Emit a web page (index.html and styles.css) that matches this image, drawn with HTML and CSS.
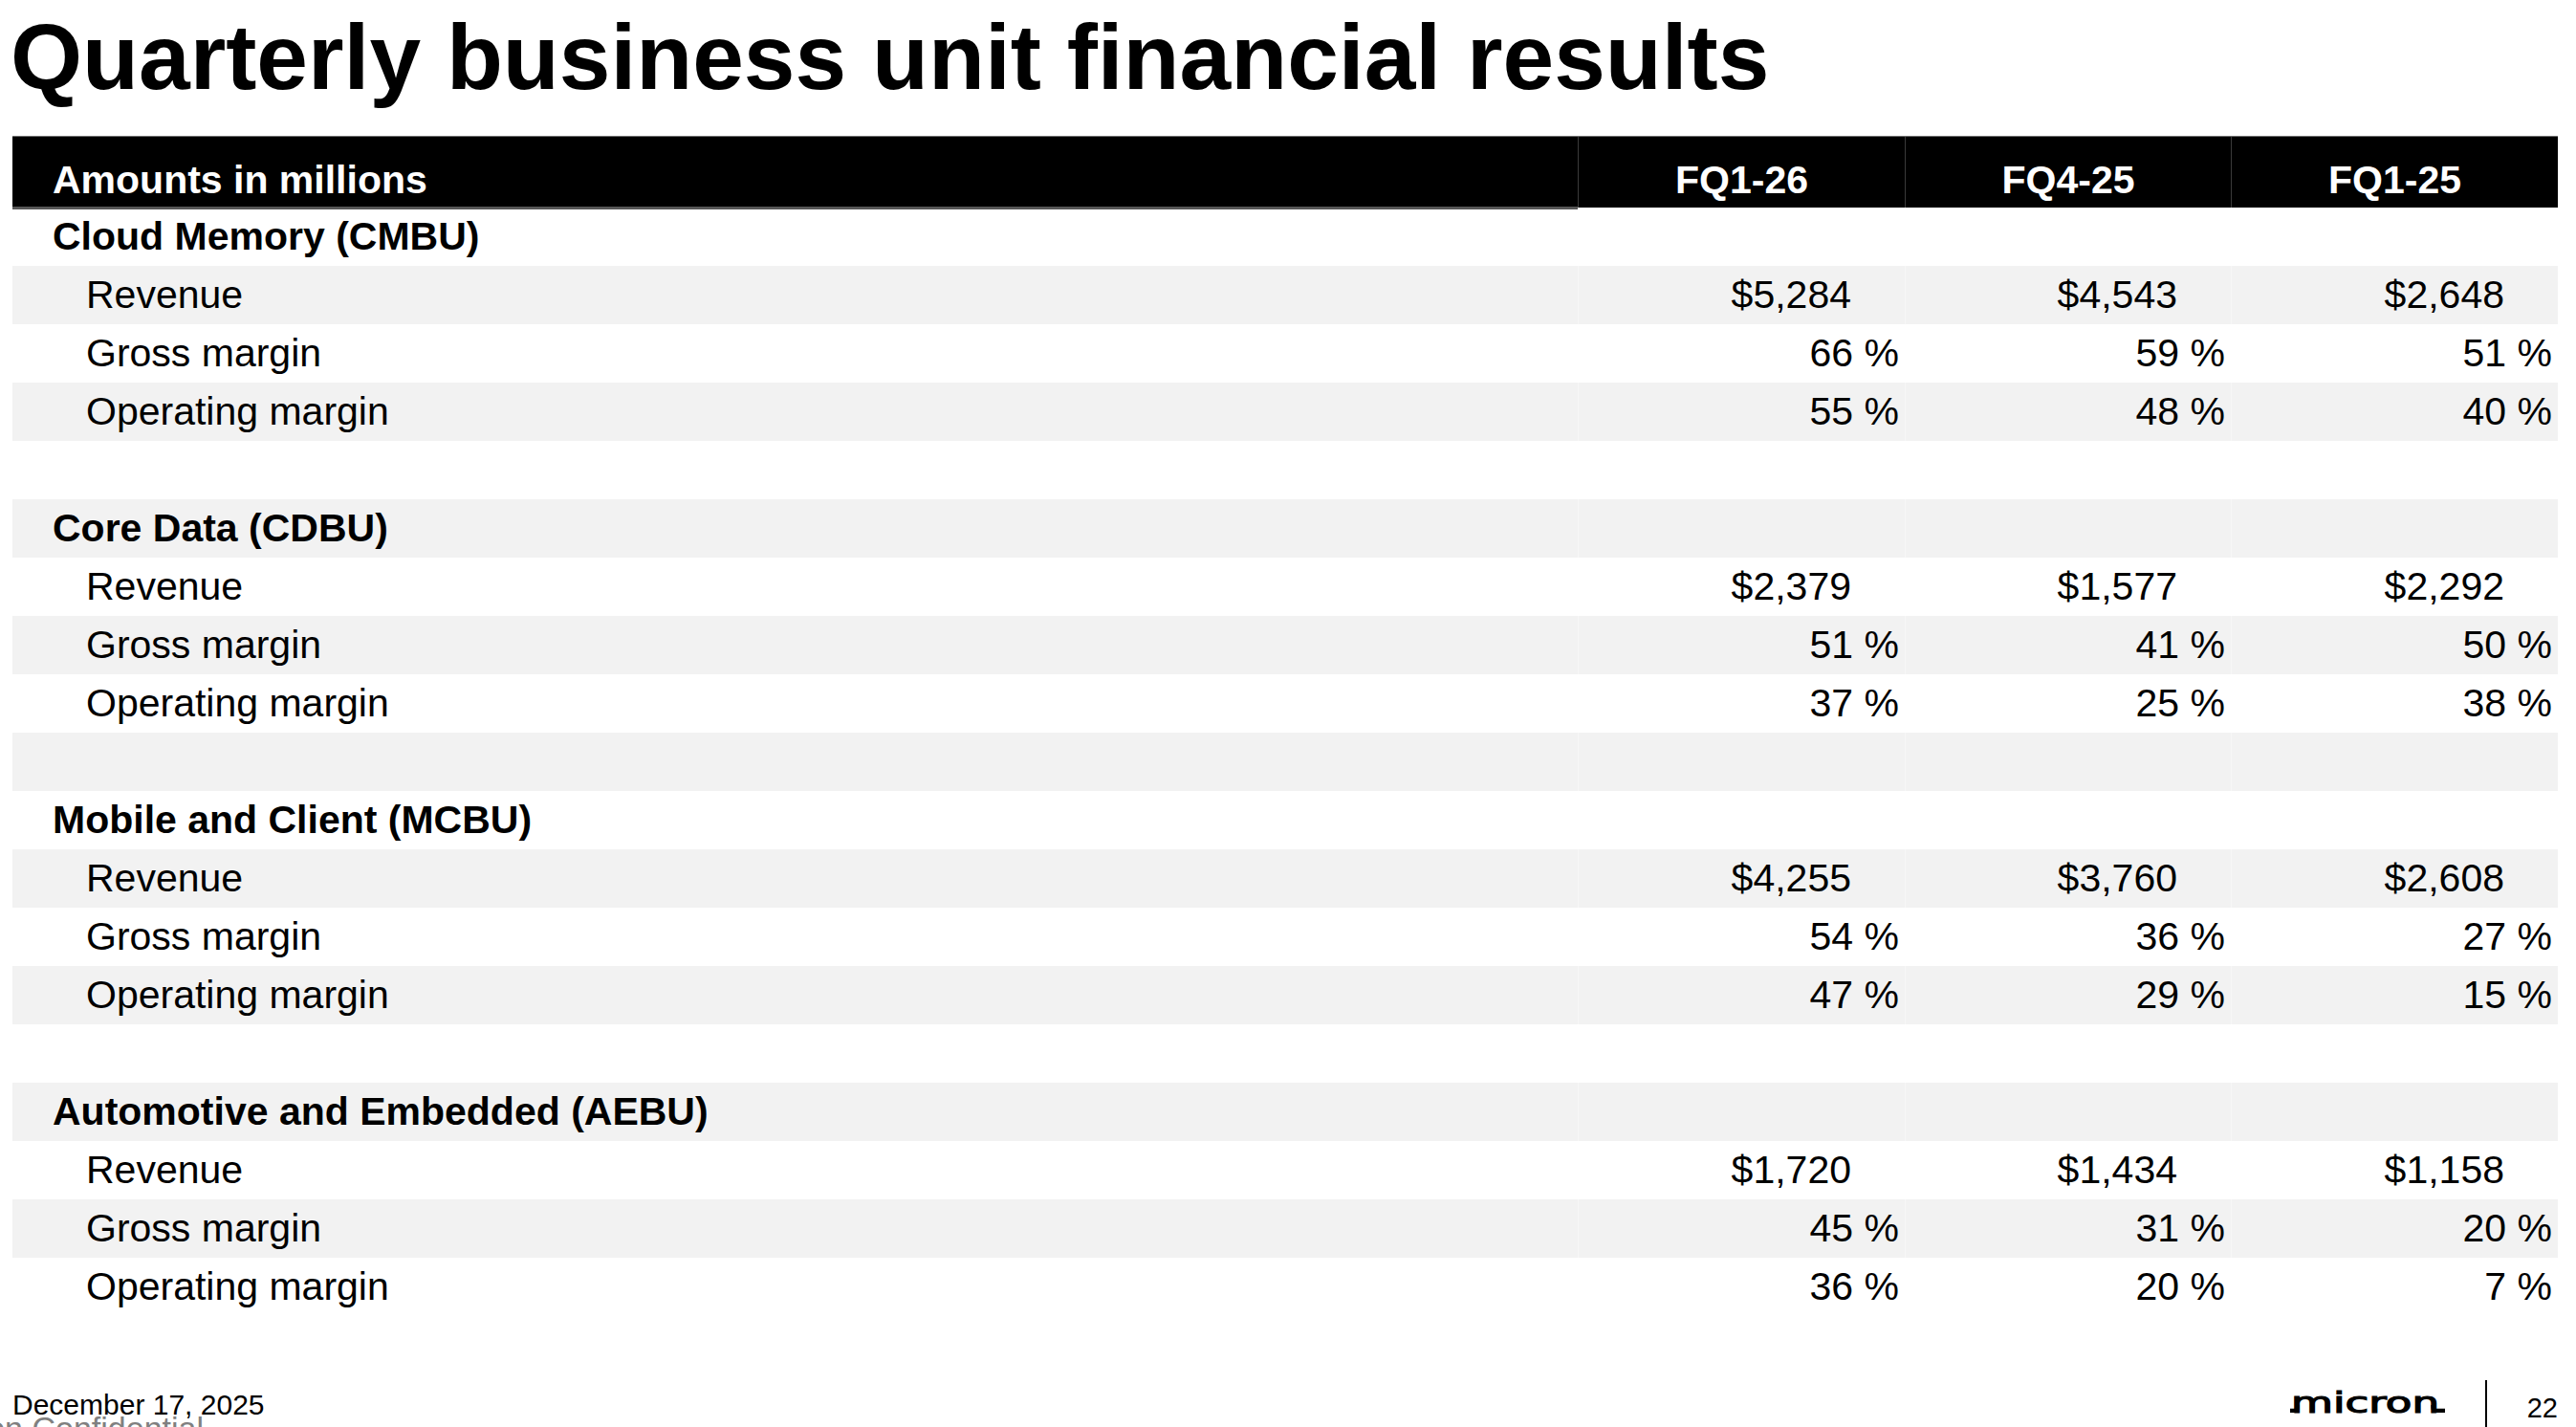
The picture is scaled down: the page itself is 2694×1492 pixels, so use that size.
FILE: index.html
```html
<!DOCTYPE html>
<html lang="en">
<head>
<meta charset="utf-8">
<title>Quarterly business unit financial results</title>
<link rel="stylesheet" href="styles.css">
</head>
<body>
<div class="slide">
  <h1 class="title">Quarterly business unit financial results</h1>

  <div class="table">
    <div class="row thead">
      <div class="cell label-head">Amounts in millions</div>
      <div class="cell col-head">FQ1-26</div>
      <div class="cell col-head">FQ4-25</div>
      <div class="cell col-head">FQ1-25</div>
    </div>

    <div class="row"><div class="cell group">Cloud Memory (CMBU)</div><div class="cell"></div><div class="cell"></div><div class="cell"></div></div>
    <div class="row shade"><div class="cell sub">Revenue</div><div class="cell dollar">$5,284</div><div class="cell dollar">$4,543</div><div class="cell dollar">$2,648</div></div>
    <div class="row"><div class="cell sub">Gross margin</div><div class="cell pct">66 %</div><div class="cell pct">59 %</div><div class="cell pct">51 %</div></div>
    <div class="row shade"><div class="cell sub">Operating margin</div><div class="cell pct">55 %</div><div class="cell pct">48 %</div><div class="cell pct">40 %</div></div>
    <div class="row"><div class="cell"></div><div class="cell"></div><div class="cell"></div><div class="cell"></div></div>

    <div class="row shade"><div class="cell group">Core Data (CDBU)</div><div class="cell"></div><div class="cell"></div><div class="cell"></div></div>
    <div class="row"><div class="cell sub">Revenue</div><div class="cell dollar">$2,379</div><div class="cell dollar">$1,577</div><div class="cell dollar">$2,292</div></div>
    <div class="row shade"><div class="cell sub">Gross margin</div><div class="cell pct">51 %</div><div class="cell pct">41 %</div><div class="cell pct">50 %</div></div>
    <div class="row"><div class="cell sub">Operating margin</div><div class="cell pct">37 %</div><div class="cell pct">25 %</div><div class="cell pct">38 %</div></div>
    <div class="row shade"><div class="cell"></div><div class="cell"></div><div class="cell"></div><div class="cell"></div></div>

    <div class="row"><div class="cell group">Mobile and Client (MCBU)</div><div class="cell"></div><div class="cell"></div><div class="cell"></div></div>
    <div class="row shade"><div class="cell sub">Revenue</div><div class="cell dollar">$4,255</div><div class="cell dollar">$3,760</div><div class="cell dollar">$2,608</div></div>
    <div class="row"><div class="cell sub">Gross margin</div><div class="cell pct">54 %</div><div class="cell pct">36 %</div><div class="cell pct">27 %</div></div>
    <div class="row shade"><div class="cell sub">Operating margin</div><div class="cell pct">47 %</div><div class="cell pct">29 %</div><div class="cell pct">15 %</div></div>
    <div class="row"><div class="cell"></div><div class="cell"></div><div class="cell"></div><div class="cell"></div></div>

    <div class="row shade"><div class="cell group">Automotive and Embedded (AEBU)</div><div class="cell"></div><div class="cell"></div><div class="cell"></div></div>
    <div class="row"><div class="cell sub">Revenue</div><div class="cell dollar">$1,720</div><div class="cell dollar">$1,434</div><div class="cell dollar">$1,158</div></div>
    <div class="row shade"><div class="cell sub">Gross margin</div><div class="cell pct">45 %</div><div class="cell pct">31 %</div><div class="cell pct">20 %</div></div>
    <div class="row"><div class="cell sub">Operating margin</div><div class="cell pct">36 %</div><div class="cell pct">20 %</div><div class="cell pct">7 %</div></div>
  </div>

  <div class="confidential">Micron Confidential</div>

  <div class="footer">
    <div class="date">December 17, 2025</div>
    <div class="footer-right">
      <svg class="logo" width="168" height="31" viewBox="0 0 168 31" aria-label="Micron logo">
        <text x="4" y="27" textLength="155" lengthAdjust="spacingAndGlyphs" class="logo-text">micron</text>
        <path d="M10.4 19 V21.5 Q10.4 24.9 7 24.9 H3" class="hook"/>
        <path d="M152.5 19 V21.5 Q152.5 24.9 155.9 24.9 H165" class="hook"/>
      </svg>
      <div class="sep"></div>
      <div class="pagenum">22</div>
    </div>
  </div>
</div>
</body>
</html>
```

FILE: styles.css
```css
html, body {
  margin: 0;
  padding: 0;
  background: #fff;
}

body {
  font-family: "Liberation Sans", Arial, sans-serif;
  color: #000;
}

.slide {
  position: relative;
  width: 2694px;
  height: 1492px;
  box-sizing: border-box;
  padding: 11px 19px 0 13px;
  display: flex;
  flex-direction: column;
  overflow: hidden;
}

.title {
  margin: 0 0 34px -2px;
  font-size: 96.5px;
  line-height: 97px;
  font-weight: 700;
  white-space: nowrap;
}

.table {
  display: flex;
  flex-direction: column;
  width: 2662px;
}

.row {
  display: grid;
  grid-template-columns: 1637px 342px 341px 342px;
  height: 61px;
  align-items: center;
  font-size: 41px;
  line-height: 1;
}

.row.shade {
  background: #f2f2f2;
}

.row.shade .cell + .cell {
  box-shadow: inset 1px 0 0 #f7f7f7;
}

.cell {
  white-space: nowrap;
  height: 100%;
  display: flex;
  align-items: center;
  box-sizing: border-box;
}

.thead {
  height: 75px;
  background: #000;
  color: #fff;
  font-weight: 700;
  border-top: 1px solid #6e6e6e;
  box-sizing: border-box;
}

.thead .cell {
  align-items: flex-end;
  padding-bottom: 8px;
}

.label-head {
  padding-left: 42px;
  box-shadow: 0 2px 0 #575757, inset 0 -1px 0 #575757;
}

.col-head {
  justify-content: center;
  border-left: 1px solid #3a3a3a;
}

.group {
  font-weight: 700;
  padding-left: 42px;
}

.sub {
  padding-left: 77px;
}

.dollar {
  justify-content: flex-end;
  padding-right: 56px;
}

.pct {
  justify-content: flex-end;
  padding-right: 6px;
}

.confidential {
  position: absolute;
  left: -78px;
  top: 1476px;
  font-size: 34px;
  line-height: 1;
  color: #808080;
  white-space: nowrap;
}

.footer {
  margin-top: auto;
  height: 49px;
  display: flex;
  align-items: flex-start;
}

.date {
  position: relative;
  font-size: 30px;
  line-height: 1;
  padding-top: 11px;
  white-space: nowrap;
}

.footer-right {
  margin-left: auto;
  display: flex;
  align-items: flex-start;
  height: 100%;
}

.logo {
  display: block;
  margin-top: 7px;
  overflow: visible;
}

.logo-text {
  font-family: "DejaVu Sans", sans-serif;
  font-size: 30px;
  fill: #000;
  stroke: #000;
  stroke-width: 1.2px;
}

.hook {
  fill: none;
  stroke: #000;
  stroke-width: 4.2px;
}

.sep {
  width: 2px;
  align-self: stretch;
  background: #000;
  margin: 0 42px 0 39px;
}

.pagenum {
  font-size: 29px;
  line-height: 1;
  padding-top: 15px;
}
```
